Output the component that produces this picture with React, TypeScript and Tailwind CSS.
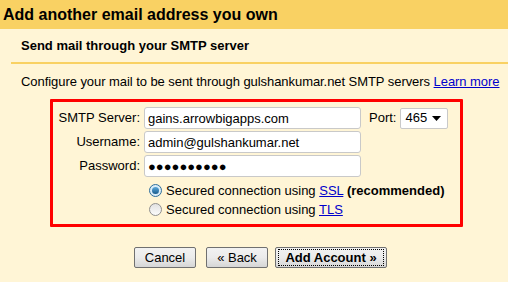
import { useState } from "react";

const font = "font-['Liberation_Sans',Arial,sans-serif]";

const TextInput = ({ value }: { value: string }) => (
  <input
    type="text"
    readOnly
    value={value}
    className={`h-[22px] w-[217px] rounded-[3px] border border-[#c9c9c9] bg-white px-[3px] text-[13px] text-black outline-none ${font}`}
  />
);

const Radio = ({ checked }: { checked: boolean }) => (
  <span
    className={`flex h-[13px] w-[13px] items-center justify-center rounded-full border ${
      checked ? "border-[#2f6e9a] bg-[#d9ecf8]" : "border-[#8f8f8f] bg-gradient-to-b from-[#e2e2e2] to-[#fbfbfb]"
    }`}
  >
    {checked && <span className="h-[7px] w-[7px] rounded-full bg-gradient-to-b from-[#5aa9dc] to-[#185c8c]" />}
  </span>
);

const Button = ({ children, focused }: { children: React.ReactNode; focused?: boolean }) => (
  <button
    type="button"
    className={`flex h-[21px] w-full items-center justify-center rounded-[2px] border border-[#707070] bg-gradient-to-b from-[#f2f2f2] via-[#ebebeb] to-[#d6d6d6] px-[2px] text-[13px] text-black ${font}`}
  >
    <span
      className={`flex h-[17px] w-full items-center justify-center ${
        focused ? "border border-dotted border-black font-bold" : "border border-transparent"
      }`}
    >
      {children}
    </span>
  </button>
);

export default function App() {
  const [ssl, setSsl] = useState(true);

  return (
    <div className={`h-[282px] w-[508px] overflow-hidden bg-[#fff5d6] text-[13px] text-black ${font}`}>
      {/* header */}
      <div className="flex h-[29px] items-center bg-[#f9d163] pl-[3px] text-[16px] font-bold leading-none">
        Add another email address you own
      </div>

      <div className="pl-[21px] pt-[9px] text-[13px] font-bold leading-[15px]">
        Send mail through your SMTP server
      </div>
      <div className="ml-[11px] mt-[9px] h-[2px] bg-[#f9d163]" />

      <div className="mt-[10px] pl-[21px] leading-[15px] tracking-[-0.06px]">
        Configure your mail to be sent through gulshankumar.net SMTP servers{" "}
        <a href="#" className="text-[#0000cc] underline">
          Learn more
        </a>
      </div>

      {/* form box */}
      <div className="ml-[50px] mt-[10px] h-[128px] w-[413px] rounded-[1px] border-[3px] border-[#ff0000] pt-[5px]">
        <div className="flex items-center">
          <span className="w-[87px] text-right">SMTP Server:</span>
          <span className="ml-[4px]">
            <TextInput value="gains.arrowbigapps.com" />
          </span>
          <span className="ml-[8px]">Port:</span>
          <span className="ml-[4px] flex h-[21px] w-[48px] items-center justify-between rounded-[2px] border border-[#c9c9c9] bg-white pl-[4px] pr-[6px]">
            465
            <svg width="9" height="5" viewBox="0 0 9 5">
              <path d="M0 0h9L4.5 5z" fill="#000" />
            </svg>
          </span>
        </div>
        <div className="mt-[2px] flex items-center">
          <span className="w-[87px] text-right">Username:</span>
          <span className="ml-[4px]">
            <TextInput value="admin@gulshankumar.net" />
          </span>
        </div>
        <div className="mt-[2px] flex items-center">
          <span className="w-[87px] text-right">Password:</span>
          <span className="ml-[4px]">
            <TextInput value="●●●●●●●●●●" />
          </span>
        </div>

        <div className="ml-[96px] mt-[7px] flex flex-col gap-[6px] leading-[13px]">
          <label className="flex cursor-pointer items-center gap-[4px]" onClick={() => setSsl(true)}>
            <Radio checked={ssl} />
            <span>
              Secured connection using{" "}
              <a href="#" className="text-[#0000cc] underline">
                SSL
              </a>{" "}
              <b>(recommended)</b>
            </span>
          </label>
          <label className="flex cursor-pointer items-center gap-[4px]" onClick={() => setSsl(false)}>
            <Radio checked={!ssl} />
            <span>
              Secured connection using{" "}
              <a href="#" className="text-[#0000cc] underline">
                TLS
              </a>
            </span>
          </label>
        </div>
      </div>

      {/* actions */}
      <div className="ml-[134px] mt-[20px] flex">
        <span className="w-[62px]">
          <Button>Cancel</Button>
        </span>
        <span className="ml-[10px] w-[62px]">
          <Button>« Back</Button>
        </span>
        <span className="ml-[7px] w-[112px]">
          <Button focused>Add Account »</Button>
        </span>
      </div>
    </div>
  );
}
